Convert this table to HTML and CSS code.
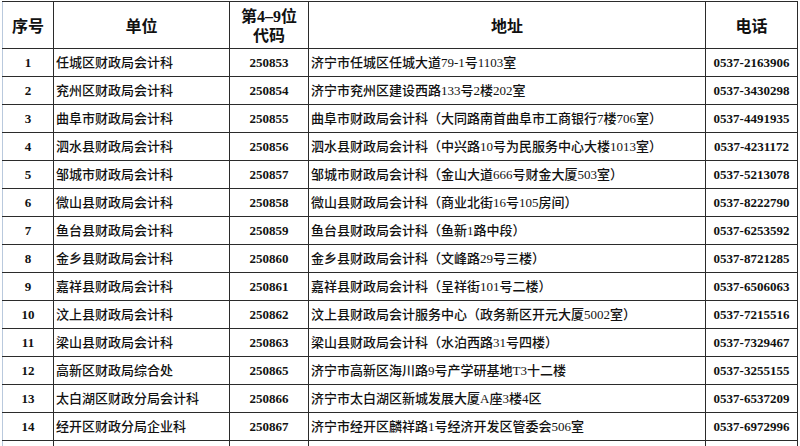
FILE: index.html
```html
<!DOCTYPE html>
<html lang="zh-CN">
<head>
<meta charset="utf-8">
<link rel="stylesheet" href="styles.css">
</head>
<body>
<div class="sheet">
<table class="grid">
<colgroup>
<col class="c1"><col class="c2"><col class="c3"><col class="c4"><col class="c5">
</colgroup>
<thead>
<tr><th class="first">序号</th><th>单位</th><th class="code-h">第4–9位<br>代码</th><th>地址</th><th>电话</th></tr>
</thead>
<tbody>
<tr><td class="first">1</td><td class="l">任城区财政局会计科</td><td class="c">250853</td><td class="l">济宁市任城区任城大道79-1号1103室</td><td class="c">0537-2163906</td></tr>
<tr><td class="first">2</td><td class="l">兖州区财政局会计科</td><td class="c">250854</td><td class="l">济宁市兖州区建设西路133号2楼202室</td><td class="c">0537-3430298</td></tr>
<tr><td class="first">3</td><td class="l">曲阜市财政局会计科</td><td class="c">250855</td><td class="l">曲阜市财政局会计科（大同路南首曲阜市工商银行7楼706室）</td><td class="c">0537-4491935</td></tr>
<tr><td class="first">4</td><td class="l">泗水县财政局会计科</td><td class="c">250856</td><td class="l">泗水县财政局会计科（中兴路10号为民服务中心大楼1013室）</td><td class="c">0537-4231172</td></tr>
<tr><td class="first">5</td><td class="l">邹城市财政局会计科</td><td class="c">250857</td><td class="l">邹城市财政局会计科（金山大道666号财金大厦503室）</td><td class="c">0537-5213078</td></tr>
<tr><td class="first">6</td><td class="l">微山县财政局会计科</td><td class="c">250858</td><td class="l">微山县财政局会计科（商业北街16号105房间）</td><td class="c">0537-8222790</td></tr>
<tr><td class="first">7</td><td class="l">鱼台县财政局会计科</td><td class="c">250859</td><td class="l">鱼台县财政局会计科（鱼新1路中段）</td><td class="c">0537-6253592</td></tr>
<tr><td class="first">8</td><td class="l">金乡县财政局会计科</td><td class="c">250860</td><td class="l">金乡县财政局会计科（文峰路29号三楼）</td><td class="c">0537-8721285</td></tr>
<tr><td class="first">9</td><td class="l">嘉祥县财政局会计科</td><td class="c">250861</td><td class="l">嘉祥县财政局会计科（呈祥街101号二楼）</td><td class="c">0537-6506063</td></tr>
<tr><td class="first">10</td><td class="l">汶上县财政局会计科</td><td class="c">250862</td><td class="l">汶上县财政局会计服务中心（政务新区开元大厦5002室）</td><td class="c">0537-7215516</td></tr>
<tr><td class="first">11</td><td class="l">梁山县财政局会计科</td><td class="c">250863</td><td class="l">梁山县财政局会计科（水泊西路31号四楼）</td><td class="c">0537-7329467</td></tr>
<tr><td class="first">12</td><td class="l">高新区财政局综合处</td><td class="c">250865</td><td class="l">济宁市高新区海川路9号产学研基地T3十二楼</td><td class="c">0537-3255155</td></tr>
<tr><td class="first">13</td><td class="l">太白湖区财政分局会计科</td><td class="c">250866</td><td class="l">济宁市太白湖区新城发展大厦A座3楼4区</td><td class="c">0537-6537209</td></tr>
<tr><td class="first">14</td><td class="l">经开区财政分局企业科</td><td class="c">250867</td><td class="l">济宁市经开区麟祥路1号经济开发区管委会506室</td><td class="c">0537-6972996</td></tr>
<tr><td class="first"></td><td class="l"></td><td class="c"></td><td class="l"></td><td class="c"></td></tr>
</tbody>
</table>
</div>
</body>
</html>
```

FILE: styles.css
```css
html, body {
  margin: 0;
  padding: 0;
  background: #ffffff;
  overflow: hidden;
  height: 446px;
}
.sheet {
  padding-left: 2px;
  padding-top: 1px;
}
.grid {
  border-collapse: collapse;
  table-layout: fixed;
  width: 796px;
  font-family: "Liberation Serif", "Noto Sans CJK SC", serif;
  color: #111;
}
.c1 { width: 51px; }
.c2 { width: 176px; }
.c3 { width: 79px; }
.c4 { width: 397px; }
.c5 { width: 92px; }
th, td {
  border: 1px solid #2b2b2b;
  padding: 0;
  white-space: nowrap;
  overflow: hidden;
}
th {
  height: 45px;
  font-family: "Noto Sans CJK SC", serif;
  font-weight: 700;
  font-size: 16px;
  line-height: 19px;
  text-align: center;
  vertical-align: middle;
}
th.code-h {
  font-family: "Liberation Serif", "Noto Sans CJK SC", serif;
  font-size: 16px;
  line-height: 19px;
  padding-top: 1px;
}
td {
  height: 27px;
  font-size: 13px;
  font-weight: 500;
  line-height: 16px;
  vertical-align: middle;
}
.first {
  border-left: 1px solid #b9c9dd;
  text-align: center;
  font-weight: 700;
}
td.l {
  text-align: left;
  padding-left: 2px;
}
td.c {
  text-align: center;
  font-weight: 700;
}
```
